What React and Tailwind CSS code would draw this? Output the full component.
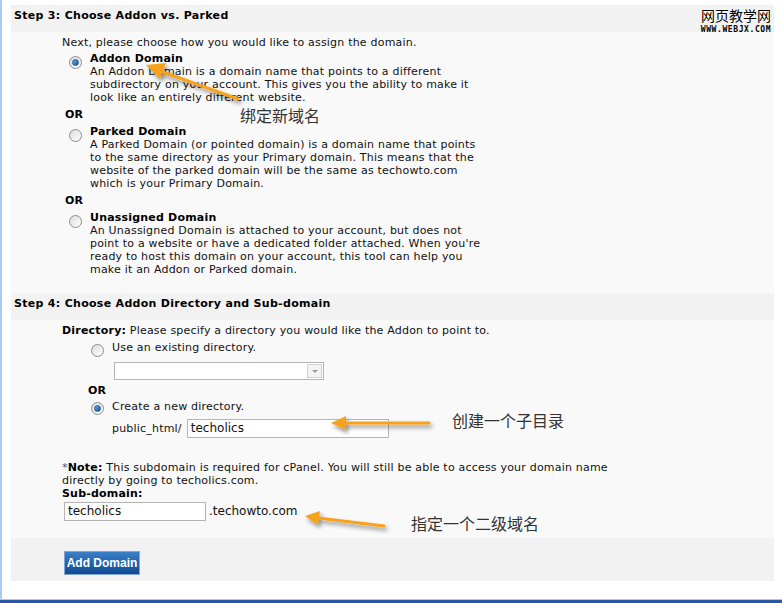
import React from 'react'

// Radio button drawn with CSS (XP-style gray circle, blue dot when checked)
function Radio({ checked = false, className = '' }) {
  return (
    <span
      className={[
        'inline-flex items-center justify-center w-[13px] h-[13px] rounded-full shrink-0',
        'border border-[#8c8c8c] bg-gradient-to-br from-[#dcdcdc] to-[#ffffff]',
        className,
      ].join(' ')}
    >
      {checked && (
        <span className="w-[7px] h-[7px] rounded-full bg-gradient-to-br from-[#6fb2e8] to-[#0e4f91] border border-[#1e5a96]" />
      )}
    </span>
  )
}

function SectionHeader({ children }) {
  return (
    <div className="h-[27px] bg-[#f2f2f2] pt-[4px] pl-[3px] font-bold text-black tracking-[0.3px]">
      {children}
    </div>
  )
}

function Option({ checked, title, lines }) {
  return (
    <div className="flex">
      <Radio checked={checked} className="ml-[7px] mt-[4px] mr-[8px]" />
      <div>
        <div className="font-bold text-black">{title}</div>
        {lines.map((l) => (
          <div key={l}>{l}</div>
        ))}
      </div>
    </div>
  )
}

function Annotations() {
  return (
    <svg className="absolute inset-0 pointer-events-none" width="782" height="603" viewBox="0 0 782 603">
      <defs>
        <filter id="sh" x="-20%" y="-50%" width="140%" height="200%">
          <feDropShadow dx="2" dy="3" stdDeviation="2" floodColor="#000" floodOpacity="0.45" />
        </filter>
      </defs>
      <g filter="url(#sh)" fill="#f7a21b" stroke="#f7a21b" strokeLinecap="round">
        {/* arrow 1 */}
        <line x1="238" y1="99" x2="160" y2="71" strokeWidth="3" />
        <polygon points="146,65 166,63 160,79" stroke="none" />
        {/* arrow 2 */}
        <line x1="429" y1="423" x2="344" y2="423" strokeWidth="3" />
        <polygon points="331,423 346,416 346,430" stroke="none" />
        {/* arrow 3 */}
        <line x1="384" y1="526" x2="318" y2="518" strokeWidth="3" />
        <polygon points="305,516 320,511 318,525" stroke="none" />
      </g>
    </svg>
  )
}

export default function App() {
  return (
    <div
      className="relative w-[782px] h-[603px] bg-white overflow-hidden text-[11px] leading-[13px] text-[#111] tracking-[0.2px]"
      style={{ fontFamily: '"DejaVu Sans", Verdana, sans-serif' }}
    >
      {/* left light-blue edge */}
      <div className="absolute left-0 top-0 w-[2px] h-[599px] bg-[#a9c9f2]" />

      <div className="ml-[11px] mr-[8px] pt-[5px]">
        {/* Step 3 */}
        <SectionHeader>Step 3: Choose Addon vs. Parked</SectionHeader>
        <div className="bg-[#f9f9f9] pl-[51px] pt-[4px] pb-[17px]">
          <div>Next, please choose how you would like to assign the domain.</div>
          <div className="mt-[3px]">
            <Option
              checked
              title="Addon Domain"
              lines={[
                'An Addon Domain is a domain name that points to a different',
                'subdirectory on your account. This gives you the ability to make it',
                'look like an entirely different website.',
              ]}
            />
          </div>
          <div className="mt-[4px] ml-[3px] font-bold text-black">OR</div>
          <div className="mt-[4px]">
            <Option
              title="Parked Domain"
              lines={[
                'A Parked Domain (or pointed domain) is a domain name that points',
                'to the same directory as your Primary domain. This means that the',
                'website of the parked domain will be the same as techowto.com',
                'which is your Primary Domain.',
              ]}
            />
          </div>
          <div className="mt-[4px] ml-[3px] font-bold text-black">OR</div>
          <div className="mt-[4px]">
            <Option
              title="Unassigned Domain"
              lines={[
                'An Unassigned Domain is attached to your account, but does not',
                "point to a website or have a dedicated folder attached. When you're",
                'ready to host this domain on your account, this tool can help you',
                'make it an Addon or Parked domain.',
              ]}
            />
          </div>
        </div>

        {/* Step 4 */}
        <SectionHeader>Step 4: Choose Addon Directory and Sub-domain</SectionHeader>
        <div className="bg-[#f9f9f9] pl-[51px] pt-[4px] pb-[17px]">
          <div>
            <span className="font-bold text-black">Directory:</span> Please specify a directory you would like the Addon to point to.
          </div>
          <div className="pl-[29px] mt-[4px] flex">
            <Radio className="mt-[3px] mr-[8px]" />
            <span>Use an existing directory.</span>
          </div>
          <div className="ml-[52px] mt-[5px] w-[210px] h-[18px] border border-[#b5b5b5] bg-white flex justify-end items-center pr-[1px]">
            <span className="w-[15px] h-[14px] border border-[#d0d0d0] bg-[#f4f4f4] flex items-center justify-center">
              <span className="w-0 h-0 border-l-[3px] border-r-[3px] border-t-[3px] border-l-transparent border-r-transparent border-t-[#9a9a9a]" />
            </span>
          </div>
          <div className="ml-[26px] mt-[4px] font-bold text-black">OR</div>
          <div className="pl-[29px] mt-[3px] flex">
            <Radio checked className="mt-[2px] mr-[8px]" />
            <span>Create a new directory.</span>
          </div>
          <div className="pl-[50px] mt-[4px] flex items-center">
            <span className="mr-[5px]">public_html/</span>
            <div className="w-[202px] h-[19px] border border-[#b5b5b5] bg-white flex items-center pl-[3px] text-[12px] tracking-normal">
              techolics
            </div>
          </div>
          <div className="mt-[23px]">
            <span className="text-[#1e5ba8]">*</span>
            <span className="font-bold text-black">Note:</span> This subdomain is required for cPanel. You will still be able to access your domain name
          </div>
          <div>directly by going to techolics.com.</div>
          <div className="font-bold text-black">Sub-domain:</div>
          <div className="mt-[2px] ml-[2px] flex items-center">
            <div className="w-[142px] h-[19px] border border-[#b5b5b5] bg-white flex items-center pl-[3px] text-[12px] tracking-normal">
              techolics
            </div>
            <span className="ml-[3px] text-[12px] tracking-normal">.techowto.com</span>
          </div>
        </div>

        {/* Button bar */}
        <div className="bg-[#f2f2f2] h-[43px] pl-[53px] pt-[13px]">
          <button
            type="button"
            className="h-[24px] w-[76px] border border-[#7fa6d4] bg-gradient-to-b from-[#3c7fc9] to-[#0e4a8f] text-white font-bold text-[12px] tracking-normal"
            style={{ fontFamily: '"Liberation Sans", Arial, sans-serif' }}
          >
            Add Domain
          </button>
        </div>
      </div>

      {/* bottom blue rule */}
      <div className="absolute left-0 right-0 top-[599px] h-[1px] bg-[#a9c9f2]" />
      <div className="absolute left-0 right-0 top-[600px] h-[3px] bg-[#2a56a6]" />

      {/* watermark */}
      <div className="absolute left-[700px] top-[7px] w-[72px] flex flex-col items-center tracking-normal">
        <span
          className="text-[14px] leading-[16px] text-black"
          style={{ fontFamily: '"Noto Sans CJK SC", sans-serif', textShadow: '0 0 2px #fff, 0 0 2px #fff' }}
        >
          网页教学网
        </span>
        <span
          className="text-[8px] leading-[9px] font-bold text-black tracking-[0.6px] mt-[2px]"
          style={{ fontFamily: '"DejaVu Sans Mono", monospace' }}
        >
          WWW.WEBJX.COM
        </span>
      </div>

      {/* annotations */}
      <Annotations />
      <div
        className="absolute left-[240px] top-[105px] text-[16px] leading-[20px] text-[#333] tracking-normal"
        style={{ fontFamily: '"Noto Sans CJK SC", sans-serif' }}
      >
        绑定新域名
      </div>
      <div
        className="absolute left-[452px] top-[410px] text-[16px] leading-[20px] text-[#333] tracking-normal"
        style={{ fontFamily: '"Noto Sans CJK SC", sans-serif' }}
      >
        创建一个子目录
      </div>
      <div
        className="absolute left-[411px] top-[513px] text-[16px] leading-[20px] text-[#333] tracking-normal"
        style={{ fontFamily: '"Noto Sans CJK SC", sans-serif' }}
      >
        指定一个二级域名
      </div>
    </div>
  )
}
